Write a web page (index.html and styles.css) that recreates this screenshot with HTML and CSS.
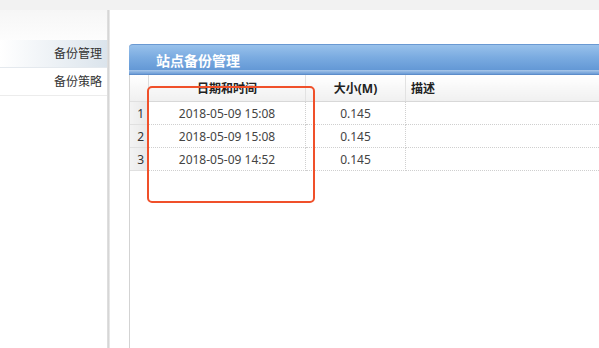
FILE: index.html
```html
<!DOCTYPE html>
<html lang="zh-CN">
<head>
    <meta charset="UTF-8">
    <meta name="viewport" content="width=device-width, initial-scale=1.0">
    <title>站点备份管理</title>
    <link rel="stylesheet" href="styles.css">
</head>
<body>

<div class="topbar"></div>

<div class="main">
    <!-- Left menu -->
    <div class="sidebar">
        <div class="menu-item active">备份管理</div>
        <div class="menu-item">备份策略</div>
    </div>
    <div class="divider"></div>

    <!-- Content -->
    <div class="content">
        <div class="panel">
            <div class="panel-header">站点备份管理</div>
            <table class="grid">
                <thead>
                    <tr>
                        <th class="num"></th>
                        <th class="col-date">日期和时间</th>
                        <th class="col-size">大小(M)</th>
                        <th class="col-desc">描述</th>
                    </tr>
                </thead>
                <tbody>
                    <tr>
                        <td class="num">1</td>
                        <td class="center">2018-05-09 15:08</td>
                        <td class="center">0.145</td>
                        <td></td>
                    </tr>
                    <tr>
                        <td class="num">2</td>
                        <td class="center">2018-05-09 15:08</td>
                        <td class="center">0.145</td>
                        <td></td>
                    </tr>
                    <tr>
                        <td class="num">3</td>
                        <td class="center">2018-05-09 14:52</td>
                        <td class="center">0.145</td>
                        <td></td>
                    </tr>
                </tbody>
            </table>
        </div>
    </div>
</div>

<!-- Annotation box drawn over the table -->
<div class="mark"></div>

</body>
</html>
```

FILE: styles.css
```css
html, body {
    margin: 0;
    padding: 0;
    height: 100%;
    overflow: hidden;
}
body {
    background-color: #f3f3f3;
    font-family: "Noto Sans", "Noto Sans CJK SC", sans-serif;
    font-size: 12px;
    color: #333;
}

.topbar {
    height: 10px;
    background-color: #f2f2f2;
}

.main {
    display: flex;
    height: 338px;
}

/* Left menu */
.sidebar {
    width: 107px;
    padding-top: 30px;
    background: linear-gradient(#f6f6f6, #ffffff 40px);
}
.menu-item {
    height: 27px;
    line-height: 27px;
    text-align: right;
    padding-right: 5px;
    color: #333;
    border-bottom: 1px solid #ececec;
    background-color: #fff;
}
.menu-item.active {
    background: linear-gradient(to right, #ffffff, #dbe4ec);
    border-bottom-color: #e4e9ee;
}

.divider {
    width: 3px;
    background: linear-gradient(to right, #e2e2e2, #d6d6d6 50%, #f0f0f0);
}

/* Content */
.content {
    flex: 1;
    background-color: #fff;
    padding: 34px 0 0 19px;
    overflow: hidden;
}
.panel {
    height: 100%;
    margin-right: -10px;
    border-left: 1px solid #d3d3d3;
    border-top-left-radius: 4px;
}
.panel-header {
    height: 29px;
    line-height: 31px;
    padding-left: 27px;
    color: #fff;
    font-weight: bold;
    font-size: 14px;
    border-top: 1px solid #6a99d2;
    border-bottom: 1px solid #5c8cc9;
    border-top-left-radius: 4px;
    margin-left: -1px;
    background: linear-gradient(#98c1eb, #79aae0 45%, #6499d6 85%, #a9c8ea 86%, #6a9bd6);
}

/* Data grid */
.grid {
    width: 100%;
    border-collapse: collapse;
    color: #444;
}
.grid th {
    height: 26px;
    font-weight: bold;
    color: #222;
    background: linear-gradient(#ffffff, #f0f0f0);
    border-right: 1px solid #e2e2e2;
    border-bottom: 1px solid #d8d8d8;
    padding: 0;
}
.grid td {
    height: 22px;
    padding: 0;
    border-right: 1px dotted #d0d0d0;
    border-bottom: 1px dotted #cfcfcf;
}
.grid .num {
    width: 14px;
    text-align: right;
    padding-right: 4px;
    color: #333;
    background: linear-gradient(to right, #f3f3f3, #e8e8e8);
    border-right: 1px solid #dcdcdc;
    border-bottom: 1px solid #e0e0e0;
}
.grid th.num {
    background: linear-gradient(#ffffff, #f0f0f0);
}
.col-date {
    width: 156px;
}
.col-size {
    width: 99px;
}
.col-desc {
    text-align: left;
    padding-left: 5px !important;
}
.center {
    text-align: center;
}

/* Red annotation rectangle */
.mark {
    position: absolute;
    left: 147px;
    top: 86px;
    width: 164px;
    height: 113px;
    border: 2px solid #f0502a;
    border-radius: 5px;
}
```
